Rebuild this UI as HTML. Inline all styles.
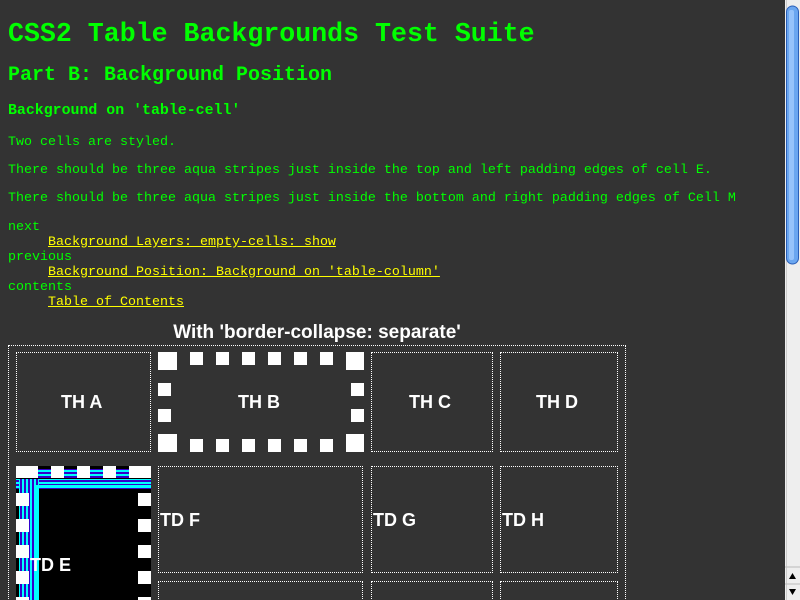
<!DOCTYPE html>
<html><head><meta charset="utf-8"><style>
html,body{margin:0;padding:0;width:800px;height:600px;overflow:hidden;background:#333;}
.t{position:absolute;white-space:pre;font-family:"Liberation Mono",monospace;color:#0f0;}
.b{font-weight:bold}
.l{color:#ff0;text-decoration:underline;display:inline-block;margin-left:40px;}
.c{position:absolute;border:1px dotted #fff;box-sizing:border-box;}
.lab{position:absolute;font:bold 18px/20px "Liberation Sans",sans-serif;color:#fff;white-space:pre;}
</style></head><body>
<div class="t b" style="left:8px;top:18px;font-size:26.6px;line-height:32px">CSS2 Table Backgrounds Test Suite</div>
<div class="t b" style="left:8px;top:64px;font-size:20px;line-height:24px">Part B: Background Position</div>
<div class="t b" style="left:8px;top:102px;font-size:14.9px;line-height:18px">Background on 'table-cell'</div>
<div class="t" style="left:8px;top:135px;font-size:13.33px;line-height:16px">Two cells are styled.</div>
<div class="t" style="left:8px;top:163px;font-size:13.33px;line-height:16px">There should be three aqua stripes just inside the top and left padding edges of cell E.</div>
<div class="t" style="left:8px;top:191px;font-size:13.33px;line-height:16px">There should be three aqua stripes just inside the bottom and right padding edges of Cell M</div>
<div class="t" style="left:8px;top:220px;font-size:13.33px;line-height:15px">next
<span class="l">Background Layers: empty-cells: show</span>
previous
<span class="l">Background Position: Background on 'table-column'</span>
contents
<span class="l">Table of Contents</span></div>
<div class="lab" style="left:8px;width:618px;text-align:center;top:323px;font-size:19px">With 'border-collapse: separate'</div>
<div style="position:absolute;left:0;top:0;width:785px;height:600px;overflow:hidden">
<div class="c" style="left:8px;top:345px;width:618px;height:280px"></div>
<div class="c" style="left:16px;top:352px;width:135px;height:100px"></div>
<div class="c" style="left:371px;top:352px;width:122px;height:100px"></div>
<div class="c" style="left:500px;top:352px;width:118px;height:100px"></div>
<div class="c" style="left:158px;top:466px;width:205px;height:107px"></div>
<div class="c" style="left:371px;top:466px;width:122px;height:107px"></div>
<div class="c" style="left:500px;top:466px;width:118px;height:107px"></div>
<div class="c" style="left:158px;top:581px;width:205px;height:40px"></div>
<div class="c" style="left:371px;top:581px;width:122px;height:40px"></div>
<div class="c" style="left:500px;top:581px;width:118px;height:40px"></div>
</div>
<svg style="position:absolute;left:0;top:0" width="800" height="600">
<g fill="#fff" stroke="#fff">
<rect x="158" y="352" width="19" height="18" stroke="none"/>
<rect x="346" y="352" width="18" height="18" stroke="none"/>
<rect x="158" y="434" width="19" height="18" stroke="none"/>
<rect x="346" y="434" width="18" height="18" stroke="none"/>
<line x1="190" y1="358.5" x2="333" y2="358.5" stroke-width="13" stroke-dasharray="13 13"/>
<line x1="190" y1="445.5" x2="333" y2="445.5" stroke-width="13" stroke-dasharray="13 13"/>
<line x1="164.5" y1="383" x2="164.5" y2="422" stroke-width="13" stroke-dasharray="13 13"/>
<line x1="357.5" y1="383" x2="357.5" y2="422" stroke-width="13" stroke-dasharray="13 13"/>
</g>
<rect x="16" y="466" width="135" height="140" fill="#000"/>
<defs>
<pattern id="h" width="4" height="4" patternUnits="userSpaceOnUse"><rect width="4" height="2" fill="#30c"/><rect y="2" width="4" height="2" fill="#0ff"/></pattern>
<pattern id="v" width="4" height="4" patternUnits="userSpaceOnUse"><rect width="2" height="4" fill="#30c"/><rect x="2" width="2" height="4" fill="#0ff"/></pattern>
</defs>
<rect x="38" y="469" width="113" height="9" fill="url(#h)"/>
<rect x="16" y="479" width="135" height="10" fill="url(#h)"/>
<rect x="19" y="479" width="10" height="127" fill="url(#v)"/>
<rect x="29" y="479" width="10" height="127" fill="url(#v)"/>
<rect x="36" y="485" width="3" height="115" fill="#0ff"/>
<rect x="36" y="485" width="115" height="3" fill="#0ff"/>
<g fill="#fff" stroke="#fff">
<rect x="16" y="466" width="22" height="12" stroke="none"/>
<rect x="129" y="466" width="22" height="12" stroke="none"/>
<line x1="51" y1="472" x2="116" y2="472" stroke-width="12" stroke-dasharray="13 13"/>
<line x1="22.5" y1="493" x2="22.5" y2="600" stroke-width="13" stroke-dasharray="13 13"/>
<line x1="144.5" y1="493" x2="144.5" y2="600" stroke-width="13" stroke-dasharray="13 13"/>
</g>
<rect x="785" y="0" width="15" height="600" fill="#eee"/>
<rect x="786" y="0" width="1" height="600" fill="#ccc"/>
<rect x="786.5" y="6" width="12" height="258" rx="6" fill="#6aa6f0" stroke="#2a5fb8"/>
<rect x="789" y="10" width="5" height="250" rx="2" fill="#a9d0ff" opacity="0.7"/>
<line x1="785" y1="567" x2="800" y2="567" stroke="#bbb"/>
<line x1="785" y1="584" x2="800" y2="584" stroke="#bbb"/>
<path d="M789 579 L796 579 L792.5 573 Z" fill="#000"/>
<path d="M789 589 L796 589 L792.5 595 Z" fill="#000"/>
</svg>
<div class="lab" style="left:61px;top:392px">TH A</div>
<div class="lab" style="left:238px;top:392px">TH B</div>
<div class="lab" style="left:409px;top:392px">TH C</div>
<div class="lab" style="left:536px;top:392px">TH D</div>
<div class="lab" style="left:30px;top:555px">TD E</div>
<div class="lab" style="left:160px;top:510px">TD F</div>
<div class="lab" style="left:373px;top:510px">TD G</div>
<div class="lab" style="left:502px;top:510px">TD H</div>
</body></html>
